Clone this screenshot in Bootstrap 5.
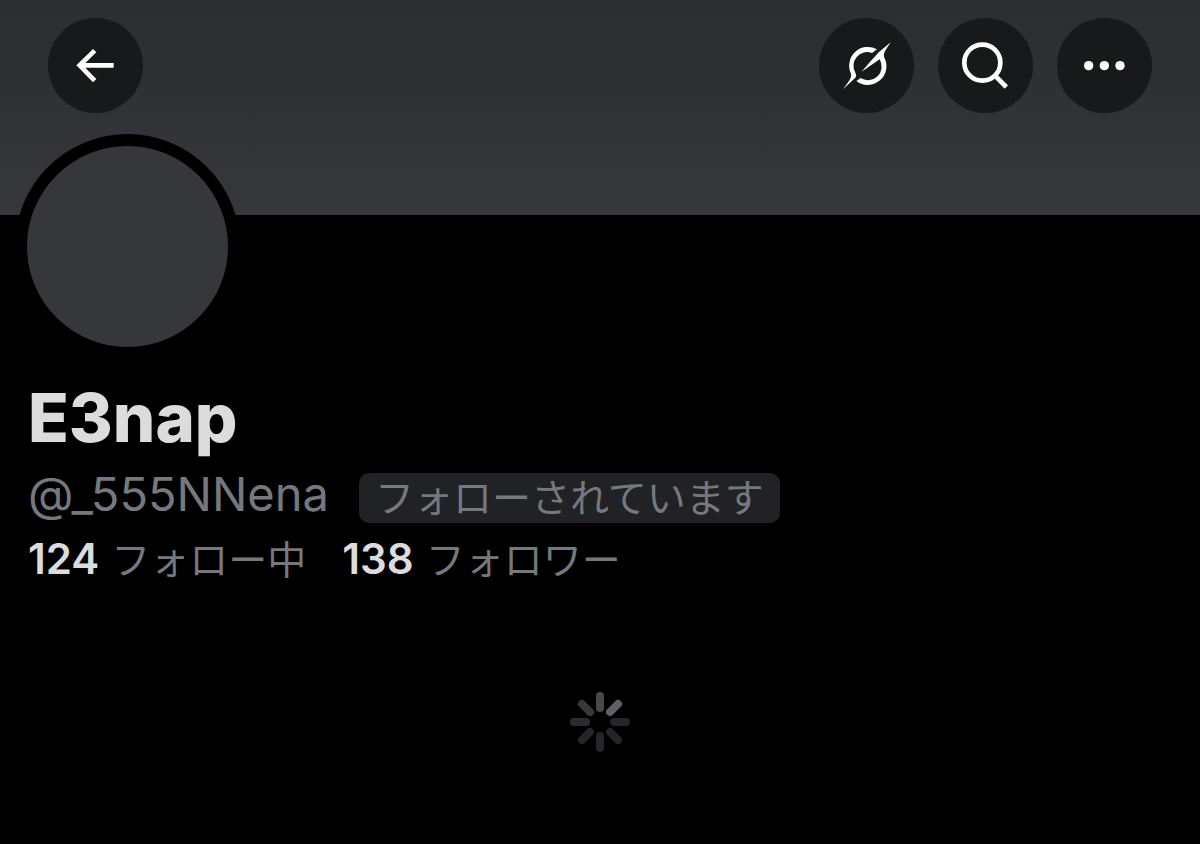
<!DOCTYPE html>
<html lang="ja" data-bs-theme="dark">
<head>
<meta charset="utf-8">
<meta name="viewport" content="width=device-width, initial-scale=1">
<title>E3nap</title>
<link href="https://cdn.jsdelivr.net/npm/bootstrap@5.3.0/dist/css/bootstrap.min.css" rel="stylesheet">
<style>
  body { background: #000; color: #dcdcdc; font-family: Inter, "Noto Sans CJK JP", sans-serif; }
  .banner { height: 215px; padding: 18px 48px; background: linear-gradient(#2b2f32 0%, #2d3033 35%, #333437 65%, #36373a 100%); }
  .toolbar-gap { gap: 24px; }
  .round-btn { width: 95px; height: 95px; background: #18191a; color: #fff; }
  .round-btn svg { display: block; width: 100%; height: 100%; }
  .profile { padding: 0 28px; }
  .avatar { width: 225px; height: 225px; margin: -81px 0 0 -13px; border: 12px solid #000; background: #36373a; }
  .display-name { font-size: 67px; line-height: 80px; font-weight: 800; margin: 19px 0 14px; color: #dcdcdc; }
  .handle-row { gap: 30px; }
  .handle { font-size: 47px; line-height: 44px; color: #75787c; }
  .follows-you { font-size: 39px; line-height: 50px; margin-top: 1px; padding: 0 16px; border-radius: 10px; background: #212226; color: #75787c; }
  .stats { gap: 36px; margin-top: 11px; }
  .stats a { font-size: 39px; line-height: 50px; color: #75787c; gap: 12px; }
  .stats strong { font-size: 42px; font-weight: 600; color: #dcdcdc; }
  .loader { width: 60px; height: 60px; margin: 107px auto 0; }
</style>
</head>
<body>
<header class="banner d-flex justify-content-between align-items-start">
  <button type="button" class="round-btn btn rounded-circle border-0 p-0" aria-label="戻る">
    <svg viewBox="24 24 285 285" fill="none" stroke="currentColor" stroke-width="14"><path d="M221 166H120M164 122L119 166L164 212"/></svg>
  </button>
  <div class="toolbar-gap d-flex">
    <button type="button" class="round-btn btn rounded-circle border-0 p-0" aria-label="Grok">
      <svg viewBox="27 24 285 285" fill="currentColor">
        <path d="M201 118A56 56 0 0 0 123 191C126 205 113 218 99 238L136 203C140 198 139 194 136 188A41 41 0 0 1 186 129Z"/>
        <path d="M242 97L207 126C192 142 172 165 155 185L209 148A41 41 0 0 1 152 204L139 213A56 56 0 0 0 223 143C218 131 227 120 242 97Z"/>
      </svg>
    </button>
    <button type="button" class="round-btn btn rounded-circle border-0 p-0" aria-label="検索">
      <svg viewBox="24 24 285 285" fill="none" stroke="currentColor" stroke-width="14"><circle cx="157" cy="158" r="54"/><path d="M195 197L229 231"/></svg>
    </button>
    <button type="button" class="round-btn btn rounded-circle border-0 p-0" aria-label="その他">
      <svg viewBox="381 24 285 285" fill="currentColor"><circle cx="476" cy="167" r="14"/><circle cx="523" cy="167" r="14"/><circle cx="570" cy="167" r="14"/></svg>
    </button>
  </div>
</header>
<main class="profile">
  <div class="avatar rounded-circle position-relative"></div>
  <h1 class="display-name">E3nap</h1>
  <div class="handle-row d-flex align-items-start flex-wrap">
    <span class="handle">@_555NNena</span>
    <span class="follows-you">フォローされています</span>
  </div>
  <nav class="stats d-flex flex-wrap" aria-label="フォロー">
    <a href="#" class="d-flex align-items-baseline text-decoration-none"><strong>124</strong><span>フォロー中</span></a>
    <a href="#" class="d-flex align-items-baseline text-decoration-none"><strong>138</strong><span>フォロワー</span></a>
  </nav>
  <div class="loader" role="status" aria-label="読み込み中">
    <svg class="d-block" viewBox="-30 -30 60 60" stroke-width="8" stroke-linecap="round">
      <path stroke="#48494c" d="M0-14V-26"/>
      <path stroke="#606165" d="M10-10L18-18"/>
      <path stroke="#262628" d="M14 0H26"/>
      <path stroke="#252527" d="M10 10L18 18"/>
      <path stroke="#262628" d="M0 14V26"/>
      <path stroke="#262628" d="M-10 10L-18 18"/>
      <path stroke="#2c2c2e" d="M-14 0H-26"/>
      <path stroke="#37383b" d="M-10-10L-18-18"/>
    </svg>
  </div>
</main>
<script src="https://cdn.jsdelivr.net/npm/bootstrap@5.3.0/dist/js/bootstrap.bundle.min.js"></script>
</body>
</html>
